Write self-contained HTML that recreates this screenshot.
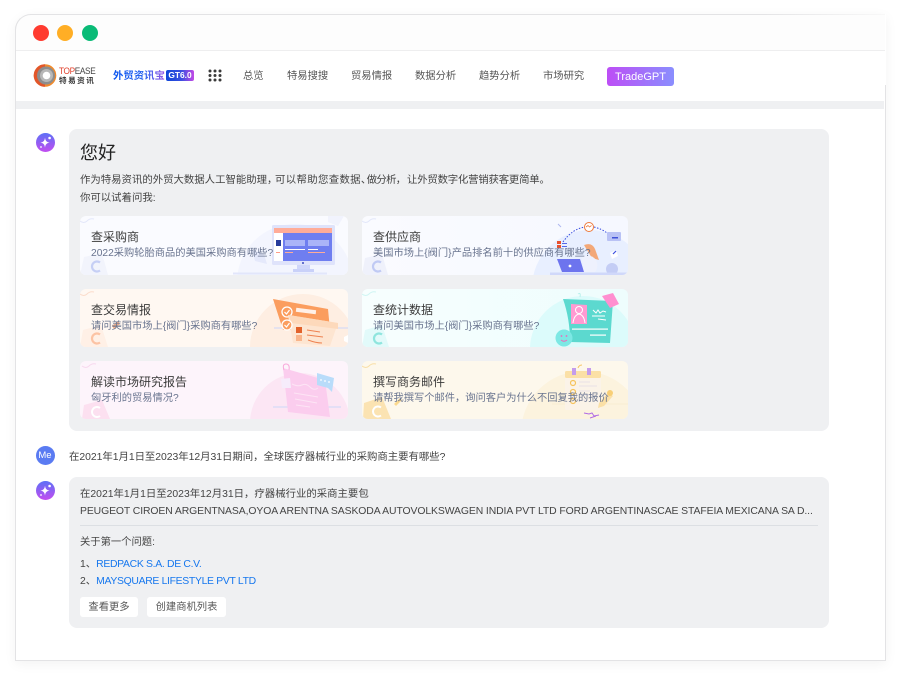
<!DOCTYPE html>
<html lang="zh-CN">
<head>
<meta charset="utf-8">
<title>TradeGPT</title>
<style>
html,body{margin:0;padding:0;background:#fff;}
body{width:900px;height:675px;position:relative;overflow:hidden;font-family:"Liberation Sans","Noto Sans CJK SC",sans-serif;color:#444;}
.t{position:absolute;white-space:nowrap;line-height:16px;height:16px;}
.win{position:absolute;left:14.5px;top:14px;width:871px;height:646.5px;box-sizing:border-box;border:1px solid #e3e3e5;border-top-color:transparent;border-right-color:transparent;border-radius:16px 0 0 0;background:#fff;box-shadow:0 3px 12px rgba(0,0,0,.05);}
.top{position:absolute;left:30px;top:14px;width:855px;height:1px;background:linear-gradient(90deg,#e3e3e5 85%,#f8f8f8);}
.tl{position:absolute;left:14.5px;top:14px;width:18px;height:18px;box-sizing:border-box;border-left:1px solid #e3e3e5;border-top:1px solid #e3e3e5;border-radius:16px 0 0 0;}
.rb{position:absolute;left:885px;top:85px;width:1px;height:576px;background:#e3e3e5;}
.bar{position:absolute;left:16px;top:15px;width:869px;height:35px;background:#fdfdfd;border-radius:15px 0 0 0;}
.barline{position:absolute;left:16px;top:50px;width:869px;height:1px;background:#eeeeef;}
.dot{position:absolute;top:25px;width:16px;height:16px;border-radius:50%;}
.strip{position:absolute;left:16px;top:101px;width:868px;height:7.5px;background:#eff0f2;}
.nav{font-size:10.3px;color:#555;top:69px;}
.gpt{position:absolute;left:607px;top:67px;width:67px;height:19px;border-radius:3px;background:linear-gradient(90deg,#bd4ef6,#8a8efe);color:#fff;font-size:11px;line-height:20px;text-align:center;}
.brand{left:113px;top:69px;font-size:10.4px;font-weight:700;background:linear-gradient(90deg,#0a55f0,#2a66f0 60%,#9a55e6);-webkit-background-clip:text;background-clip:text;color:transparent;}
.gt{position:absolute;left:166px;top:70px;width:28px;height:11px;border-radius:2px;background:linear-gradient(90deg,#0e45d8,#3a4fe0 55%,#c44ae6);color:#fff;font-size:8.4px;line-height:11px;font-weight:700;text-align:center;}
.panel{position:absolute;left:69px;width:760px;background:#eff0f2;border-radius:8px;}
.card{position:absolute;overflow:hidden;border-radius:6px;}
.card svg{position:absolute;left:0;top:0;}
.ct{position:absolute;left:11px;top:13px;font-size:12px;line-height:16px;color:#3a3a3a;white-space:nowrap;}
.cs{position:absolute;left:11px;top:29.5px;font-size:10.25px;line-height:16px;color:#69748f;white-space:nowrap;}
.btn{position:absolute;top:597px;height:20px;background:#fff;border-radius:3px;font-size:10.3px;line-height:22px;text-align:center;color:#555;}
a{color:#1677ee;text-decoration:none;letter-spacing:-.31px;}
.p{font-size:10.4px;color:#444;top:173px;}
</style>
</head>
<body>
<div class="win"></div>
<div class="top"></div>
<div class="rb"></div>
<div class="bar"></div>
<div class="tl"></div>
<div class="barline"></div>
<div class="dot" style="left:32.5px;background:#ff3b30"></div>
<div class="dot" style="left:57px;background:#ffae25"></div>
<div class="dot" style="left:82px;background:#0abb77"></div>

<svg style="position:absolute;left:33px;top:64px" width="24" height="24" viewBox="0 0 24 24">
<circle cx="12" cy="11.5" r="11.3" fill="#f08a2c"/>
<path d="M12 .2A11.3 11.3 0 0 0 12 22.8" fill="#e2562a"/>
<circle cx="13" cy="11.5" r="9" fill="#8d8d8d"/>
<circle cx="13.5" cy="11.5" r="6.5" fill="#b8b8b8"/>
<circle cx="13.5" cy="11.5" r="3.8" fill="#fff"/>
</svg>
<div class="t" style="left:59px;top:63px;font-size:9.4px;color:#e0402c;letter-spacing:-.4px;transform:scaleX(.88);transform-origin:0 50%">TOP<span style="color:#444">EASE</span></div>
<div class="t" style="left:59px;top:73px;font-size:7.6px;color:#333;letter-spacing:1.5px;font-weight:700">特易资讯</div>

<div class="t brand">外贸资讯宝</div>
<div class="gt">GT6.0</div>
<svg style="position:absolute;left:208px;top:69px" width="14" height="13" viewBox="0 0 14 13" fill="#3a3a3a">
<circle cx="2" cy="2" r="1.5"/><circle cx="7" cy="2" r="1.5"/><circle cx="12" cy="2" r="1.5"/>
<circle cx="2" cy="6.5" r="1.5"/><circle cx="7" cy="6.5" r="1.5"/><circle cx="12" cy="6.5" r="1.5"/>
<circle cx="2" cy="11" r="1.5"/><circle cx="7" cy="11" r="1.5"/><circle cx="12" cy="11" r="1.5"/>
</svg>
<div class="t nav" style="left:243px">总览</div>
<div class="t nav" style="left:287px">特易搜搜</div>
<div class="t nav" style="left:351px">贸易情报</div>
<div class="t nav" style="left:415px">数据分析</div>
<div class="t nav" style="left:479px">趋势分析</div>
<div class="t nav" style="left:543px">市场研究</div>
<div class="gpt">TradeGPT</div>
<div class="strip"></div>

<svg style="position:absolute;left:35.5px;top:132.5px" width="19" height="19" viewBox="0 0 19 19">
<defs><linearGradient id="g1" x1="0" y1="0" x2="0" y2="1"><stop offset="0" stop-color="#5d70f6"/><stop offset="1" stop-color="#c24df0"/></linearGradient></defs>
<circle cx="9.5" cy="9.5" r="9.5" fill="url(#g1)"/>
<path d="M9 4.6C9.5 8 10.4 9 13.6 9.6 10.4 10.2 9.5 11.2 9 14.6 8.5 11.2 7.6 10.2 4.4 9.6 7.6 9 8.5 8 9 4.6Z" fill="#fff"/>
<circle cx="13.6" cy="5" r="1.3" fill="#fff"/><circle cx="5" cy="14" r=".9" fill="#fff"/>
</svg>

<div class="panel" style="top:129px;height:302px"></div>
<div class="t" style="left:80px;top:141px;height:24px;line-height:24px;font-size:18px;color:#222">您好</div>
<div class="t p" style="left:80px">作为特易资讯的外贸大数据人工智能助理&#65292;</div>
<div class="t p" style="left:275px;letter-spacing:.35px">可以帮助您查数据&#12289;</div>
<div class="t p" style="left:366.7px;letter-spacing:-.7px">做分析&#65292;</div>
<div class="t p" style="left:407px;letter-spacing:-.2px">让外贸数字化营销获客更简单&#12290;</div>
<div class="t p" style="left:80px;top:191px">你可以试着问我:</div>

<!-- Card 1 -->
<div class="card" style="left:80px;top:216px;width:268px;height:59px;background:#fafbff">
<svg width="268" height="59" viewBox="0 0 268 59">
<circle cx="215" cy="66" r="58" fill="#f3f5fe"/>
<path d="M0 5q4 3 7 0t7-2" stroke="#e3e7fa" stroke-width="1" fill="none"/>
<path d="M4 41l18-4 6 22H0Z" fill="#f2f4fc"/>
<path d="M20 46.500a5 5 0 1 0 0 8" stroke="#c6cff5" stroke-width="2.200" fill="none"/>
<path d="M172 34l12 4 3 10-12-3Z" fill="#e5e9fb"/>
<path d="M248 0h16l-6 10-10-4Z" fill="#f1f3fd"/>
<rect x="153" y="56.500" width="94" height="2" fill="#e2e6fb"/>
<rect x="192" y="9" width="63" height="40" rx="1.5" fill="#dfe3fb"/>
<rect x="194" y="12" width="58" height="5" fill="#ffac98"/>
<rect x="194" y="17" width="9" height="28" fill="#fff"/>
<rect x="196" y="24" width="5" height="6" fill="#253a9c"/>
<rect x="196" y="36" width="4" height="1" fill="#ff9d88"/>
<rect x="203" y="17" width="49" height="28" fill="#6f7ef0"/>
<rect x="205" y="24" width="20" height="6" fill="#aab4f8"/>
<rect x="228" y="24" width="21" height="6" fill="#aab4f8"/>
<rect x="205" y="33" width="20" height="1" fill="#fff"/>
<rect x="228" y="33" width="10" height="1" fill="#fff"/>
<rect x="205" y="36" width="8" height="1" fill="#ffac98"/>
<rect x="228" y="36" width="17" height="1" fill="#ffac98"/>
<rect x="217" y="49" width="13" height="4" fill="#cfd6fa"/>
<rect x="213" y="53" width="21" height="3" fill="#c9d1f9"/>
<circle cx="223" cy="47" r="1" fill="#3d4cc0"/>
</svg>
<div class="ct">查采购商</div>
<div class="cs">2022采购轮胎商品的美国采购商有哪些?</div>
</div>

<!-- Card 2 -->
<div class="card" style="left:362px;top:216px;width:266px;height:59px;background:linear-gradient(90deg,#fafbff,#f6f8ff)">
<svg width="266" height="59" viewBox="0 0 266 59">
<circle cx="228" cy="72" r="58" fill="#e8efff"/>
<path d="M0 5q4 3 7 0t7-2" stroke="#e3e7fa" stroke-width="1" fill="none"/>
<path d="M3 42l17-4 6 21H0Z" fill="#eff1fb"/>
<path d="M19 46.500a5 5 0 1 0 0 8" stroke="#c0caf4" stroke-width="2.200" fill="none"/>
<path d="M201 26Q210 13 223 11M232 11Q240 13 245 17" stroke="#3a4fe0" stroke-width="1" stroke-dasharray="1.5 1.5" fill="none"/>
<circle cx="227" cy="11" r="4.500" fill="#fff" stroke="#ee7a3c" stroke-width="1"/>
<path d="M224 11l2-1.500 1.500 1.500 2-1.500" stroke="#ee7a3c" stroke-width=".8" fill="none"/>
<rect x="195" y="25" width="4" height="3" fill="#e8502e"/>
<rect x="195" y="29" width="4" height="3" fill="#e8502e"/>
<rect x="200" y="27" width="5" height="1" fill="#5468e8"/>
<rect x="200" y="30" width="5" height="1" fill="#5468e8"/>
<path d="M196 8l3 3" stroke="#aeb8f0" stroke-width="1"/>
<rect x="245" y="16" width="14" height="9" rx="1" fill="#b9c2f5"/>
<rect x="250" y="21" width="6" height="1.500" fill="#3f51d8"/>
<path d="M248 37l6-3 2 6-6 3Z" fill="#fff"/>
<path d="M251 38l3-3" stroke="#3a4fe0" stroke-width="1.200"/>
<path d="M222 29q8-3 11 4l4 11-7-2-5-8Z" fill="#f3a878"/>
<path d="M220 40q10-2 14 4 3 7-1 12h-12Z" fill="#eef1fd"/>
<path d="M195 43h23l4 13h-22Z" fill="#6d74ee"/>
<circle cx="208" cy="50" r="1.400" fill="#fff"/>
<circle cx="250" cy="53" r="6" fill="#c4cdf5"/>
<rect x="188" y="56.500" width="78" height="2.500" fill="#d0d8fa"/>
</svg>
<div class="ct">查供应商</div>
<div class="cs">美国市场上{阀门}产品排名前十的供应商有哪些?</div>
</div>

<!-- Card 3 -->
<div class="card" style="left:80px;top:289px;width:268px;height:58px;background:#fff8f2">
<svg width="268" height="58" viewBox="0 0 268 58">
<circle cx="223" cy="58" r="53" fill="#feeee2"/>
<path d="M0 5q4 3 7 0t7-2" stroke="#fbdccb" stroke-width="1" fill="none"/>
<path d="M3 41l18-5 7 22H0Z" fill="#fff0e6"/>
<path d="M20 45.500a5 5 0 1 0 0 8" stroke="#fcc3a4" stroke-width="2.200" fill="none"/>
<path d="M32 37l6-5 2 3-6 5Z" fill="#fbb38a"/>
<rect x="194" y="38.500" width="74" height="1" fill="#ccd6fa"/>
<path d="M193 10l55 10 2 21h-47Z" fill="#fb9d5e"/>
<circle cx="207" cy="23" r="5" fill="none" stroke="#fff" stroke-width="1.300"/>
<path d="M204.500 23l2 2 3-4" stroke="#fff" stroke-width="1.200" fill="none"/>
<rect x="216" y="20" width="20" height="4" fill="#fff" opacity=".85" transform="rotate(7 226 22)"/>
<path d="M208 26l50 8-8 23-37-3Z" fill="#fde5d1"/>
<path d="M209 26l49 8 0 6-47-6Z" fill="#fdd9bb"/>
<circle cx="207" cy="36" r="5" fill="#fb9d5e" stroke="#fff" stroke-width="1.300"/>
<path d="M204.500 36l2 2 3-4" stroke="#fff" stroke-width="1.200" fill="none"/>
<rect x="216" y="38" width="6" height="6" fill="#e2622b"/>
<rect x="216" y="46" width="6" height="6" fill="#f9b48a"/>
<path d="M227 41l13 2M227 46l16 2M228 51q8 3 14 3" stroke="#ee8250" stroke-width="1" fill="none"/>
<path d="M264 48l4-2v8l-4-2Z" fill="#fff"/>
</svg>
<div class="ct">查交易情报</div>
<div class="cs">请问美国市场上{阀门}采购商有哪些?</div>
</div>

<!-- Card 4 -->
<div class="card" style="left:362px;top:289px;width:266px;height:58px;background:linear-gradient(90deg,#f7fefe,#eefdfd)">
<svg width="266" height="58" viewBox="0 0 266 58">
<circle cx="221" cy="60" r="53" fill="#dcfbfb"/>
<path d="M0 5q4 3 7 0t7-2" stroke="#cff5f3" stroke-width="1" fill="none"/>
<path d="M3 41l17-5 7 22H0Z" fill="#e2fafa"/>
<path d="M20 45.500a5 5 0 1 0 0 8" stroke="#8fe5de" stroke-width="2.200" fill="none"/>
<path d="M216 5q3-2 2 3" stroke="#b8f0ec" stroke-width="1" fill="none"/>
<path d="M201 10l50 2-3 42-40-1Q208 30 201 10Z" fill="#5cd9cf"/>
<path d="M209 15l16 1v19h-16Z" fill="#ff9ad2"/>
<circle cx="217" cy="21" r="3.500" fill="none" stroke="#fff" stroke-width="1"/>
<path d="M211 34q1-8 6-9 5 1 6 9" fill="none" stroke="#fff" stroke-width="1"/>
<path d="M231 21l3 3 2-3 2 3 3-2 3 1M230 27l13 0M236 30l8 1" stroke="#fff" stroke-width="1" fill="none"/>
<path d="M240 7l11-3 6 11-9 4Z" fill="#ff8fd0"/>
<rect x="210" y="39.500" width="36" height="1.200" fill="#fff"/>
<rect x="228" y="45.500" width="16" height="1.200" fill="#fff"/>
<circle cx="202" cy="49" r="8.500" fill="#7de8e4"/>
<circle cx="199.500" cy="47" r=".9" fill="#f066b8"/>
<circle cx="204.500" cy="47" r=".9" fill="#f066b8"/>
<path d="M199 51q3 2.500 6 0" stroke="#f066b8" stroke-width=".9" fill="none"/>
</svg>
<div class="ct">查统计数据</div>
<div class="cs">请问美国市场上{阀门}采购商有哪些?</div>
</div>

<!-- Card 5 -->
<div class="card" style="left:80px;top:361px;width:268px;height:58px;background:#fdf4fb">
<svg width="268" height="58" viewBox="0 0 268 58">
<circle cx="220" cy="62" r="50" fill="#fce6f4"/>
<path d="M2 5q4 3 7 0t7-2" stroke="#f7d8ee" stroke-width="1" fill="none"/>
<path d="M4 44l18-5 8 19H2Z" fill="#fce0f0"/>
<path d="M20 47a5 5 0 1 0 0 8" stroke="#fff" stroke-width="2" fill="none"/>
<rect x="193" y="45.500" width="68" height="1" fill="#cdd8f8"/>
<path d="M203 7l42 12 5 37-42-5Z" fill="#fbcdee"/>
<path d="M212 23q6 3 10 1t8 2 8 1M214 32l24 4M215 38l22 4M216 44l14 2" stroke="#fde5f5" stroke-width="1" fill="none"/>
<path d="M204 9q-2-6 2-6t3 6" stroke="#f8a8da" stroke-width="1" fill="none"/>
<path d="M201 18l9-1 1 10-9 0Z" fill="#f6ecfb"/>
<path d="M237 12l17 5-2 14-4-4-11-3Z" fill="#b9dcfa"/>
<circle cx="241" cy="19" r=".9" fill="#fff"/><circle cx="245" cy="20" r=".9" fill="#fff"/><circle cx="249" cy="21" r=".9" fill="#fff"/>
</svg>
<div class="ct">解读市场研究报告</div>
<div class="cs">匈牙利的贸易情况?</div>
</div>

<!-- Card 6 -->
<div class="card" style="left:362px;top:361px;width:266px;height:58px;background:#fdf8ec">
<svg width="266" height="58" viewBox="0 0 266 58">
<circle cx="221" cy="72" r="62" fill="#fcf3de"/>
<path d="M0 5q4 3 7 0t7-2" stroke="#f8dfa8" stroke-width="1" fill="none"/>
<path d="M2 42l18-6 9 22H1Z" fill="#fbe3b2"/>
<path d="M19 46.500a5 5 0 1 0 0 8" stroke="#fff" stroke-width="2" fill="none"/>
<path d="M32 43l6-6 2 2-6 6Z" fill="#fbd98f"/>
<rect x="190" y="42.500" width="76" height="1" fill="#f7ecd3"/>
<rect x="203" y="10" width="36" height="39" rx="1.500" fill="#fbf3e8"/>
<rect x="203" y="10" width="36" height="7" rx="1.500" fill="#fbe0a6"/>
<rect x="210" y="7" width="4" height="7" fill="#c49cec"/>
<rect x="225" y="7" width="4" height="7" fill="#c49cec"/>
<path d="M216 7q1-3 4-3" stroke="#f5c664" stroke-width="1" fill="none"/>
<circle cx="211" cy="22" r="2.500" fill="none" stroke="#f6c35c" stroke-width="1.200"/>
<circle cx="211" cy="31" r="2.500" fill="none" stroke="#f6c35c" stroke-width="1.200"/>
<circle cx="211" cy="40" r="2.500" fill="none" stroke="#f6c35c" stroke-width="1.200"/>
<path d="M217 21h11M217 25h18M217 30h11M217 34h15M217 39h9" stroke="#e8e0e6" stroke-width="1" fill="none"/>
<path d="M237 42l9-10 5 3-9 10-6 2Z" fill="#fbe0a6"/>
<circle cx="248" cy="32" r="3" fill="#f8cf76"/>
<path d="M222 52l5 1 3-1 2 3 5-1M228 57l6-2" stroke="#b06be4" stroke-width="1" fill="none"/>
</svg>
<div class="ct">撰写商务邮件</div>
<div class="cs">请帮我撰写个邮件&#65292;询问客户为什么不回复我的报价</div>
</div>

<!-- Me -->
<div style="position:absolute;left:35.5px;top:446px;width:19px;height:19px;border-radius:50%;background:#5a7bf2;color:#fff;font-size:9.5px;line-height:19px;text-align:center">Me</div>
<div class="t" style="left:69px;top:450px;font-size:10.4px;letter-spacing:-.03px;color:#444">在2021年1月1日至2023年12月31日期间&#65292;全球医疗器械行业的采购商主要有哪些?</div>

<svg style="position:absolute;left:35.5px;top:480.5px" width="19" height="19" viewBox="0 0 19 19">
<defs><linearGradient id="g2" x1="0" y1="0" x2="0" y2="1"><stop offset="0" stop-color="#5d70f6"/><stop offset="1" stop-color="#c24df0"/></linearGradient></defs>
<circle cx="9.5" cy="9.5" r="9.5" fill="url(#g2)"/>
<path d="M9 4.6C9.5 8 10.4 9 13.6 9.6 10.4 10.2 9.5 11.2 9 14.6 8.5 11.2 7.6 10.2 4.4 9.6 7.6 9 8.5 8 9 4.6Z" fill="#fff"/>
<circle cx="13.6" cy="5" r="1.3" fill="#fff"/><circle cx="5" cy="14" r=".9" fill="#fff"/>
</svg>

<div class="panel" style="top:477px;height:151px"></div>
<div class="t" style="left:80px;top:487px;font-size:10.4px;color:#444">在2021年1月1日至2023年12月31日&#65292;疗器械行业的采商主要包</div>
<div class="t" style="left:80px;top:504px;font-size:10.4px;letter-spacing:-.09px;color:#444">PEUGEOT CIROEN ARGENTNASA,OYOA ARENTNA SASKODA AUTOVOLKSWAGEN INDIA PVT LTD FORD ARGENTINASCAE STAFEIA MEXICANA SA D...</div>
<div style="position:absolute;left:80px;top:525px;width:738px;height:1px;background:#dcdfe3"></div>
<div class="t" style="left:80px;top:535px;font-size:10.3px;color:#444">关于第一个问题:</div>
<div class="t" style="left:80px;top:557px;font-size:10.4px;color:#444">1、<a>REDPACK S.A. DE C.V.</a></div>
<div class="t" style="left:80px;top:574px;font-size:10.4px;color:#444">2、<a>MAYSQUARE LIFESTYLE PVT LTD</a></div>
<div class="btn" style="left:80px;width:58px">查看更多</div>
<div class="btn" style="left:147px;width:79px">创建商机列表</div>
</body>
</html>
